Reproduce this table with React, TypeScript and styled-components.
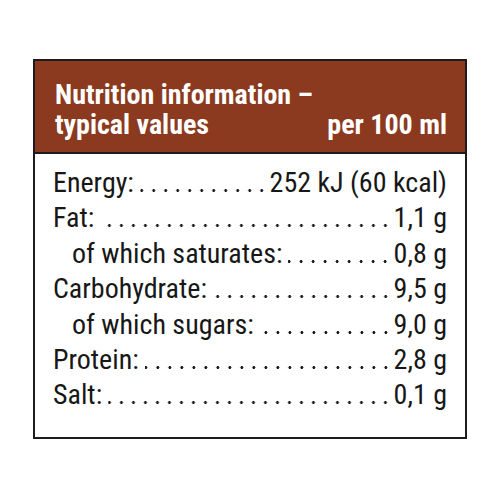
import styled, { createGlobalStyle } from 'styled-components';

const GlobalStyle = createGlobalStyle`
  html, body {
    margin: 0;
    padding: 0;
    background: #ffffff;
  }
  #root {
    width: 500px;
    height: 500px;
  }
`;

const Page = styled.div`
  width: 500px;
  height: 500px;
  padding: 59px 33px 0;
  box-sizing: border-box;
  font-family: "Roboto Condensed", Roboto, "Liberation Sans", sans-serif;
  font-stretch: 75%;
`;

const Label = styled.section`
  width: 434px;
  height: 380px;
  box-sizing: border-box;
  border: 2px solid #1c1c1c;
  display: flex;
  flex-direction: column;
`;

const Header = styled.header`
  background: #8b3a1f;
  color: #ffffff;
  border-bottom: 2px solid #1c1c1c;
  padding: 19px 18px 12px 20px;
  font-weight: 700;
  font-size: 28px;
  line-height: 30px;
`;

const HeaderRow = styled.div`
  display: flex;
  justify-content: space-between;
`;

const Rows = styled.div`
  padding: 11px 18px 0;
`;

const Row = styled.div<{ $indent?: boolean }>`
  display: flex;
  align-items: baseline;
  font-size: 28px;
  line-height: 35.4px;
  color: #171717;
  padding-left: ${({ $indent }) => ($indent ? '19px' : '0')};
  white-space: nowrap;
`;

/* dotted leader between label and value, dots aligned to the value */
const Leader = styled.span`
  flex: 1;
  height: 3px;
  margin: 0 2px 0 6px;
  background-image: radial-gradient(circle, #171717 1.3px, transparent 1.7px);
  background-size: 12px 3px;
  background-repeat: repeat-x;
  background-position: right bottom;
`;

const rows: { label: string; value: string; indent?: boolean }[] = [
  { label: 'Energy:', value: '252 kJ (60 kcal)' },
  { label: 'Fat:', value: '1,1 g' },
  { label: 'of which saturates:', value: '0,8 g', indent: true },
  { label: 'Carbohydrate:', value: '9,5 g' },
  { label: 'of which sugars:', value: '9,0 g', indent: true },
  { label: 'Protein:', value: '2,8 g' },
  { label: 'Salt:', value: '0,1 g' },
];

export default function App() {
  return (
    <Page>
      <GlobalStyle />
      <Label>
        <Header>
          <div>Nutrition information –</div>
          <HeaderRow>
            <span>typical values</span>
            <span>per 100 ml</span>
          </HeaderRow>
        </Header>
        <Rows>
          {rows.map((r) => (
            <Row key={r.label} $indent={r.indent}>
              <span>{r.label}</span>
              <Leader />
              <span>{r.value}</span>
            </Row>
          ))}
        </Rows>
      </Label>
    </Page>
  );
}
